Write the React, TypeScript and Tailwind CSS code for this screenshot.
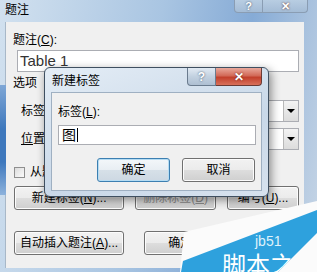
import type { ReactNode } from "react";

const font = "font-['Liberation_Sans','Noto_Sans_CJK_SC',sans-serif]";

/** Win7 style push button. */
function Btn({ children, className = "", primary = false, dim = false }: { children?: ReactNode; className?: string; primary?: boolean; dim?: boolean }) {
  return (
    <div
      className={`flex h-[24px] items-center justify-center rounded-[3px] border text-[12px] leading-none ${
        primary
          ? "border-[#3c7fb1] bg-[linear-gradient(#f3f7fa,#e8eef3_50%,#d6e0e8_51%,#cdd8e2)] shadow-[inset_0_0_0_1px_#b5dcf3]"
          : "border-[#707070] bg-[linear-gradient(#f2f2f2,#ebebeb_50%,#dddddd_51%,#cfcfcf)] shadow-[inset_0_0_0_1px_#fcfcfc]"
      } ${dim ? "text-[#8a8a8a]" : "text-black"} ${className}`}
    >
      {children}
    </div>
  );
}

function Combo({ className = "" }: { className?: string }) {
  return (
    <div className={`flex h-[22px] items-stretch border border-[#abadb3] bg-white ${className}`}>
      <div className="flex-1" />
      <div className="flex w-[15px] items-center justify-center border-l border-[#b8b8b8] bg-[linear-gradient(#f3f3f3,#dcdcdc)]">
        <div className="h-0 w-0 border-x-[4px] border-t-[4px] border-x-transparent border-t-black" />
      </div>
    </div>
  );
}

function CaptionButtons({ active }: { active: boolean }) {
  const size = active ? "h-[18px] text-[12px] leading-[16px]" : "h-[13px] text-[11px] leading-[12px]";
  return (
    <div className="flex">
      <div
        className={`flex w-[29px] items-center justify-center rounded-bl-[4px] border border-t-0 font-bold text-white [text-shadow:0_0_2px_#33475e] ${size} ${
          active ? "border-[#6a7b8e] bg-[linear-gradient(#e2eaf3,#c2d1e0_50%,#aebfd2)]" : "border-[#8a9db3] bg-[linear-gradient(#b8cde2,#a4bcd6)]"
        }`}
      >
        ?
      </div>
      <div
        className={`flex items-center justify-center rounded-br-[4px] border border-l-0 border-t-0 font-bold text-white [text-shadow:0_0_2px_#5a1a10] ${size} ${
          active
            ? "w-[46px] border-[#6a3a34] bg-[linear-gradient(#e9a99c,#d26a58_45%,#c2402c_55%,#d8705a)]"
            : "w-[45px] border-[#8a9db3] bg-[linear-gradient(#b8cde2,#a4bcd6)]"
        }`}
      >
        ✕
      </div>
    </div>
  );
}

function NewLabelDialog() {
  return (
    <div className="absolute left-[44px] top-[67px] flex h-[130px] w-[225px] flex-col rounded-[6px] border border-[#3f4f60] bg-[linear-gradient(160deg,#e4edf6,#c9d8e8_60%,#d7e2ee)] shadow-[2px_3px_10px_rgba(0,0,0,0.45)]">
      <div className="flex h-[24px] justify-between pl-[7px] pr-[6px]">
        <span className="mt-[5px] text-[12px] leading-[16px]">新建标签</span>
        <CaptionButtons active />
      </div>
      <div className="mx-[6px] flex-1 border border-[#9fb0c2] bg-[#f0f0f0] px-[6px]">
        <div className="mt-[11px] text-[12px] leading-[16px]">
          标签(<u>L</u>):
        </div>
        <div className="mt-[5px] flex h-[20px] w-[198px] items-center border border-[#abadb3] bg-white pl-[3px] text-[14px]">
          <span className="leading-none">图</span>
          <span className="ml-[1px] h-[14px] w-px bg-black" />
        </div>
        <div className="mt-[13px] flex gap-[12px] pl-[39px]">
          <Btn primary className="w-[73px]">确定</Btn>
          <Btn className="w-[73px]">取消</Btn>
        </div>
      </div>
      <div className="h-[5px]" />
    </div>
  );
}

function Watermark() {
  const band = "317,210 317,233 278,272 181,272 183,261";
  return (
    <svg className="pointer-events-none absolute left-0 top-0" width="317" height="272">
      <defs>
        <clipPath id="band">
          <polygon points={band} />
        </clipPath>
      </defs>
      <polygon points="184,232 317,201 317,272 180,272" fill="#fbfbfb" />
      <polygon points={band} fill="#2ea1dd" />
      <g clipPath="url(#band)">
        <text x="255" y="246" fill="#dff2fb" fontSize="14" fontFamily="Liberation Sans, sans-serif">jb51</text>
        <text x="222" y="274" fill="#ffffff" fontSize="24" fontFamily="Noto Sans CJK SC, sans-serif">脚本之家</text>
      </g>
    </svg>
  );
}

export default function App() {
  return (
    <div className={`relative h-[272px] w-[317px] overflow-hidden bg-[linear-gradient(100deg,#d2e1ef,#a9c5e2_45%,#86abd6_70%,#c9d7e6)] text-[12px] text-black ${font}`}>
      <div className="pointer-events-none absolute left-0 top-[85px] h-[110px] w-[6px] bg-[linear-gradient(#7fa7d6,#3e78bd_40%,#3e78bd_70%,#8db2dc)]" />
      <div className="flex h-[22px] justify-between pl-[5px] pr-[9px]">
        <span className="mt-[2px] leading-[16px]">题注</span>
        <CaptionButtons active={false} />
      </div>

      <div className="ml-[5px] h-[246px] w-[299px] border-l border-[#a8b8c8] bg-[#f0f0f0] pl-[7px] pr-[5px]">
        <div className="pt-[10px] leading-[16px]">
          题注(<u>C</u>):
        </div>
        <div className="ml-[4px] mt-[2px] flex h-[22px] items-center border border-[#abadb3] bg-white pl-[2px] text-[15px] text-[#333]">
          Table 1
        </div>
        <div className="mt-[3px] leading-[16px]">选项</div>
        <div className="mt-[9px] flex items-center pl-[8px]">
          <span className="w-[47px] leading-[16px]">标签</span>
          <Combo className="flex-1" />
        </div>
        <div className="mt-[6px] flex items-center pl-[8px]">
          <span className="w-[47px] leading-[16px]">
            <u>位</u>置
          </span>
          <Combo className="flex-1" />
        </div>
        <div className="mt-[14px] flex items-center gap-[5px] pl-[1px]">
          <div className="h-[11px] w-[11px] border border-[#8f8f8f] bg-[linear-gradient(135deg,#dcdcdc,#fbfbfb)]" />
          <span className="leading-[16px]">从题注中</span>
        </div>
        <div className="mt-[6px] flex gap-[11px] pl-[1px]">
          <Btn className="w-[112px]">
            新建标签(<u>N</u>)...
          </Btn>
          <Btn dim className="w-[82px]">
            删除标签(<u>D</u>)
          </Btn>
          <Btn className="w-[73px]">
            编号(<u>U</u>)...
          </Btn>
        </div>
        <div className="mt-[21px] flex pl-[1px]">
          <Btn className="w-[112px]">
            自动插入题注(<u>A</u>)...
          </Btn>
          <Btn className="ml-[20px] w-[73px]">确定</Btn>
          <Btn className="ml-[11px] w-[73px]" />
        </div>
      </div>

      <NewLabelDialog />
      <Watermark />
    </div>
  );
}
